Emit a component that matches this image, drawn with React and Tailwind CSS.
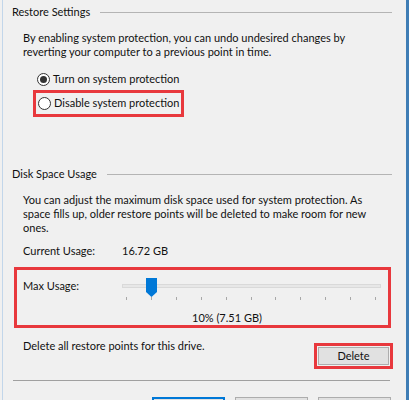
import React from "react";

const ticks = [0, 1, 2, 3, 4, 5, 6, 7, 8, 9, 10];

const GroupHeader = ({ title }) => (
  <div className="h-[24px] flex items-center pl-[9px] pr-[14px]">
    <span className="leading-[14px]">{title}</span>
    <div className="flex-1 h-px bg-[#b4b4b4] ml-[10px]" />
  </div>
);

const Radio = ({ checked }) => (
  <span className="w-[13px] h-[13px] rounded-full border border-[#333] bg-white flex items-center justify-center shrink-0">
    {checked && <span className="w-[7px] h-[7px] rounded-full bg-[#333]" />}
  </span>
);

const Slider = () => (
  <div className="relative w-[259px] h-[26px]">
    {/* Track */}
    <div className="absolute left-0 right-0 top-[8px] h-[4px] bg-[#e7e7e7] border border-[#d9d9d9]" />
    {/* Thumb */}
    <svg
      className="absolute left-[24px] top-[2px]"
      width="11"
      height="19"
      viewBox="0 0 11 19"
    >
      <path d="M0 0 H11 V14 L5.5 19 L0 14 Z" fill="#0078d7" />
    </svg>
    {/* Ticks */}
    {ticks.map((t) => (
      <div
        key={t}
        className="absolute top-[21px] w-px h-[3px] bg-[#a8a8a8]"
        style={{ left: 4 + Math.round(t * 24.9) }}
      />
    ))}
  </div>
);

export default function App() {
  return (
    <div className="w-[409px] h-[400px] bg-[#f0f0f0] flex items-start overflow-hidden whitespace-nowrap text-[11px] text-[#111] font-['Lato',sans-serif]">
      <div className="w-[2px] h-[400px] shrink-0" />
      <div className="w-px h-[400px] shrink-0 bg-[#c2d6ea]" />

      <div className="flex-1 flex flex-col">
        {/* Restore Settings */}
        <GroupHeader title="Restore Settings" />
        <p className="mt-[7px] pl-[20px] leading-[14px]">
          By enabling system protection, you can undo undesired changes by
          <br />
          reverting your computer to a previous point in time.
        </p>

        <div className="mt-[12px] h-[16px] pl-[34px] flex items-center gap-[3px]">
          <Radio checked />
          <span>Turn on system protection</span>
        </div>

        <div className="mt-[3px] ml-[30px] w-[151px] h-[27px] border-[3px] border-[#e8383d] flex items-center pl-[2px] gap-[3px]">
          <Radio />
          <span>Disable system protection</span>
        </div>

        {/* Disk Space Usage */}
        <div className="mt-[45px]">
          <GroupHeader title="Disk Space Usage" />
        </div>
        <p className="mt-[7px] pl-[20px] pr-[14px] leading-[14px]">
          You can adjust the maximum disk space used for system protection. As
          <br />
          space fills up, older restore points will be deleted to make room for new
          <br />
          ones.
        </p>

        <div className="mt-[8px] h-[16px] pl-[20px] flex items-center">
          <span className="w-[99px]">Current Usage:</span>
          <span>16.72 GB</span>
        </div>

        <div className="mt-[8px] ml-[11px] w-[377px] h-[61px] border-[3px] border-[#e8383d] flex flex-col">
          <div className="mt-[6px] pl-[6px] flex items-start">
            <span className="w-[99px] h-[20px] leading-[20px]">Max Usage:</span>
            <Slider />
          </div>
          <div className="mt-[9px] pl-[175px] h-[14px] leading-[14px]">10% (7.51 GB)</div>
        </div>

        <div className="flex justify-between items-start pl-[20px] pr-[13px]">
          <span className="mt-[11px] leading-[14px]">Delete all restore points for this drive.</span>
          <div className="mt-[15px] w-[79px] h-[26px] border-[3px] border-[#e8383d] p-px">
            <div className="h-full bg-[#e1e1e1] border border-[#adadad] flex items-center justify-center">
              Delete
            </div>
          </div>
        </div>

        <div className="mt-[11px] ml-[10px] mr-[16px] h-px bg-[#a0a0a0]" />

        <div className="mt-[16px] ml-[149px] flex gap-[10px]">
          <div className="w-[73px] h-[22px] bg-[#e1e1e1] border-2 border-[#0078d7]" />
          <div className="w-[73px] h-[22px] bg-[#e1e1e1] border border-[#adadad]" />
          <div className="w-[73px] h-[22px] bg-[#e1e1e1] border border-[#adadad]" />
        </div>
      </div>

      <div className="w-[3px] h-[400px] shrink-0 bg-[#3f7db5]" />
    </div>
  );
}
